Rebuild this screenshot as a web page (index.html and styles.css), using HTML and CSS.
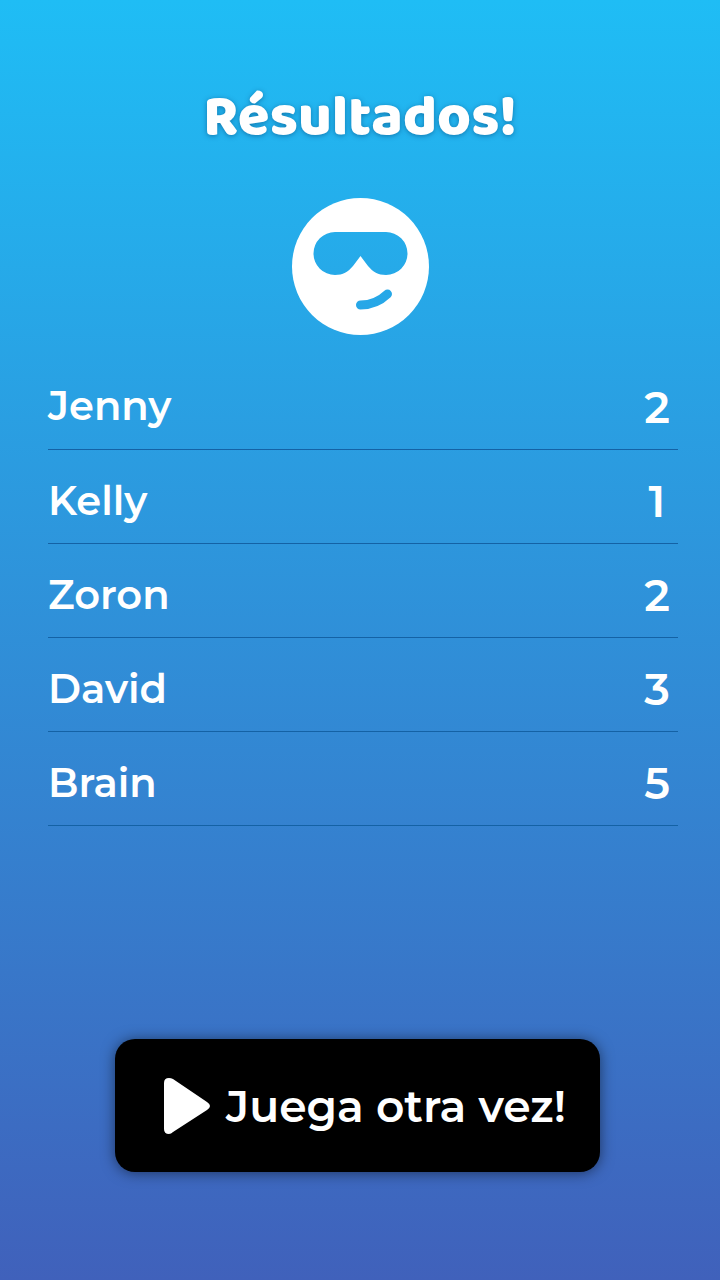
FILE: index.html
```html
<!DOCTYPE html>
<html lang="es">
<head>
  <meta charset="UTF-8">
  <meta name="viewport" content="width=device-width, initial-scale=1.0">
  <title>Résultados</title>
  <link rel="stylesheet" href="styles.css">
</head>
<body>
  <header class="cabecera">
    <h1>Résultados!</h1>
    <svg class="cara" viewBox="0 0 137 137" aria-hidden="true">
      <mask id="recorte">
        <rect width="137" height="137" fill="#fff"/>
        <path fill="#000" d="M43 34H94A21.5 21.5 0 0 1 94 77C86 77 81 74 76 68L68.5 58L61 68C56 74 51 77 43 77A21.5 21.5 0 0 1 43 34Z"/>
        <path fill="none" stroke="#000" stroke-width="9" stroke-linecap="round" d="M68.5 107Q84 107 95.5 96"/>
      </mask>
      <circle cx="68.5" cy="68.5" r="68.5" fill="#fff" mask="url(#recorte)"/>
    </svg>
  </header>

  <main class="contenido">
    <table class="puntos">
      <tbody>
        <tr><th scope="row">Jenny</th><td>2</td></tr>
        <tr><th scope="row">Kelly</th><td>1</td></tr>
        <tr><th scope="row">Zoron</th><td>2</td></tr>
        <tr><th scope="row">David</th><td>3</td></tr>
        <tr><th scope="row">Brain</th><td>5</td></tr>
      </tbody>
    </table>
  </main>

  <footer class="acciones">
    <button type="button" class="jugar">
      <svg class="play" viewBox="0 0 46 56" aria-hidden="true">
        <path fill="#fff" d="M0 5Q0 0 5 0Q7 0 9 1L43 24Q46 26 46 28T43 32L9 54Q7 56 5 56Q0 56 0 51Z"/>
      </svg>
      <span>Juega otra vez!</span>
    </button>
  </footer>
</body>
</html>
```
FILE: styles.css
```css
* {
  box-sizing: border-box;
}
body {
  margin: 0;
  min-height: 100vh;
  display: flex;
  flex-direction: column;
  font-family: Montserrat, Inter, sans-serif;
  color: #fff;
  background: linear-gradient(#1fbdf5, #4061bb);
}

.cabecera {
  display: flex;
  flex-direction: column;
  align-items: center;
  gap: 46px;
  padding-top: 84px;
}
h1 {
  margin: 0;
  font-family: Baloo, "Baloo 2", "Open Sans", sans-serif;
  font-size: 58px;
  font-weight: 800;
  line-height: 68px;
  text-shadow: 0 1px 5px rgba(0, 60, 110, 0.5);
}
.cara {
  width: 137px;
  height: 137px;
}

.contenido {
  padding: 20px 42px 0 48px;
}
.puntos {
  width: 100%;
  border-collapse: collapse;
}
.puntos th,
.puntos td {
  height: 94px;
  border-bottom: 1px solid #1462a5;
  font-weight: 600;
}
.puntos th {
  padding: 8px 0 0;
  font-size: 40px;
  text-align: left;
}
.puntos td {
  width: 42px;
  padding: 10px 0 0;
  font-size: 44px;
  text-align: center;
}

.acciones {
  margin-top: auto;
  padding: 0 120px 108px 115px;
}
.jugar {
  display: flex;
  align-items: center;
  gap: 16px;
  width: 100%;
  min-height: 133px;
  padding: 0 20px 0 49px;
  border: none;
  border-radius: 20px;
  background: #000;
  color: #fff;
  font-family: inherit;
  font-size: 44px;
  font-weight: 600;
  white-space: nowrap;
  box-shadow: 0 1px 14px rgba(0, 0, 0, 0.5);
  cursor: pointer;
}
.play {
  flex: none;
  width: 46px;
  height: 56px;
}
```
